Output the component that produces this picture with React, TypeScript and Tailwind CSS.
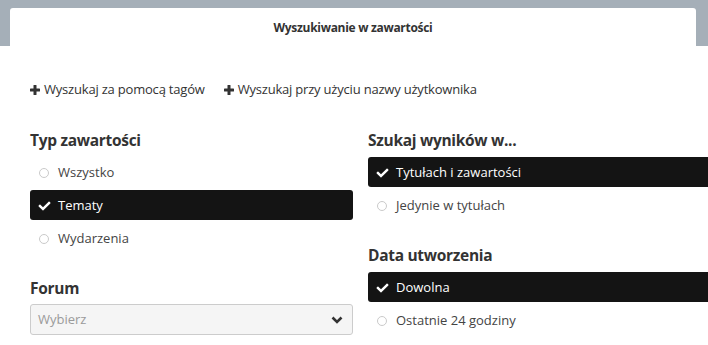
import React from 'react';

const font = { fontFamily: '"Open Sans", "Noto Sans", sans-serif' };

function CheckIcon() {
  return (
    <svg viewBox="0 0 512 512" className="h-[12px] w-[13px]" fill="currentColor">
      <path d="M173.898 439.404l-166.4-166.4c-9.997-9.997-9.997-26.206 0-36.204l36.203-36.204c9.997-9.998 26.207-9.998 36.204 0L192 312.69 432.095 72.596c9.997-9.997 26.207-9.997 36.204 0l36.203 36.204c9.997 9.997 9.997 26.206 0 36.204l-294.4 294.401c-9.998 9.997-26.207 9.997-36.204-.001z" />
    </svg>
  );
}

function PlusIcon() {
  return (
    <svg viewBox="0 0 10 10" className="h-[10px] w-[10px]" fill="currentColor">
      <rect x="3.5" y="0" width="3" height="10" rx="0.6" />
      <rect x="0" y="3.5" width="10" height="3" rx="0.6" />
    </svg>
  );
}

function ChevronDown() {
  return (
    <svg viewBox="0 0 12 8" className="h-[8px] w-[12px]" fill="none" stroke="currentColor" strokeWidth={2.6}>
      <path d="M1.5 1.5 6 6 10.5 1.5" />
    </svg>
  );
}

type Option = { label: string; checked?: boolean };

function OptionRow({ label, checked }: Option) {
  return (
    <div
      className={`flex h-[30px] items-center gap-[7px] rounded-[3px] pl-[7px] pt-[2px] text-[13px] ${
        checked ? 'bg-[#141414] text-white' : 'text-[#444]'
      }`}
    >
      <span className="flex w-[14px] items-center justify-center">
        {checked ? (
          <CheckIcon />
        ) : (
          <span className="h-[10px] w-[10px] rounded-full border border-[#cacaca]" />
        )}
      </span>
      <span>{label}</span>
    </div>
  );
}

function Heading({ children, className = '' }: { children: React.ReactNode; className?: string }) {
  return (
    <h3 className={`h-[22px] text-[15.5px] font-bold leading-[22px] tracking-[-0.3px] text-[#333] ${className}`}>
      {children}
    </h3>
  );
}

function Section({ title, options }: { title: string; options: Option[] }) {
  return (
    <div>
      <Heading className="mb-[6px]">{title}</Heading>
      <div className="flex flex-col gap-[3px]">
        {options.map((o) => (
          <OptionRow key={o.label} {...o} />
        ))}
      </div>
    </div>
  );
}

export default function App() {
  return (
    <div className="h-[345px] w-[708px] overflow-hidden bg-white" style={font}>
      <div className="h-[46px] bg-[#a5afb8] pl-[10px] pr-[12px] pt-[8px]">
        <div className="flex h-[38px] justify-center rounded-t-[3px] bg-white pt-[12px]">
          <span className="text-[12px] font-bold leading-[16px] tracking-[-0.3px] text-[#333]">
            Wyszukiwanie w zawartości
          </span>
        </div>
      </div>

      <div className="px-[30px]">
        <div className="mt-[35px] flex h-[18px] items-center gap-[19px] text-[13px] tracking-[-0.2px] text-[#333]">
          <span className="flex items-center gap-[4px]">
            <PlusIcon />
            Wyszukaj za pomocą tagów
          </span>
          <span className="flex items-center gap-[4px]">
            <PlusIcon />
            Wyszukaj przy użyciu nazwy użytkownika
          </span>
        </div>

        <div className="mt-[30px] flex gap-[15px]">
          <div className="flex w-[323px] shrink-0 flex-col gap-[24px]">
            <Section
              title="Typ zawartości"
              options={[{ label: 'Wszystko' }, { label: 'Tematy', checked: true }, { label: 'Wydarzenia' }]}
            />
            <div>
              <Heading className="mb-[5px]">Forum</Heading>
              <div className="flex h-[31px] items-center justify-between rounded-[3px] border border-[#cccccc] bg-[#f5f5f5] pl-[7px] pr-[9px] text-[13px] text-[#9a9a9a]">
                <span>Wybierz</span>
                <span className="text-[#333]">
                  <ChevronDown />
                </span>
              </div>
            </div>
          </div>

          <div className="flex w-[360px] shrink-0 flex-col gap-[24px]">
            <Section
              title="Szukaj wyników w..."
              options={[{ label: 'Tytułach i zawartości', checked: true }, { label: 'Jedynie w tytułach' }]}
            />
            <Section
              title="Data utworzenia"
              options={[{ label: 'Dowolna', checked: true }, { label: 'Ostatnie 24 godziny' }]}
            />
          </div>
        </div>
      </div>
    </div>
  );
}
